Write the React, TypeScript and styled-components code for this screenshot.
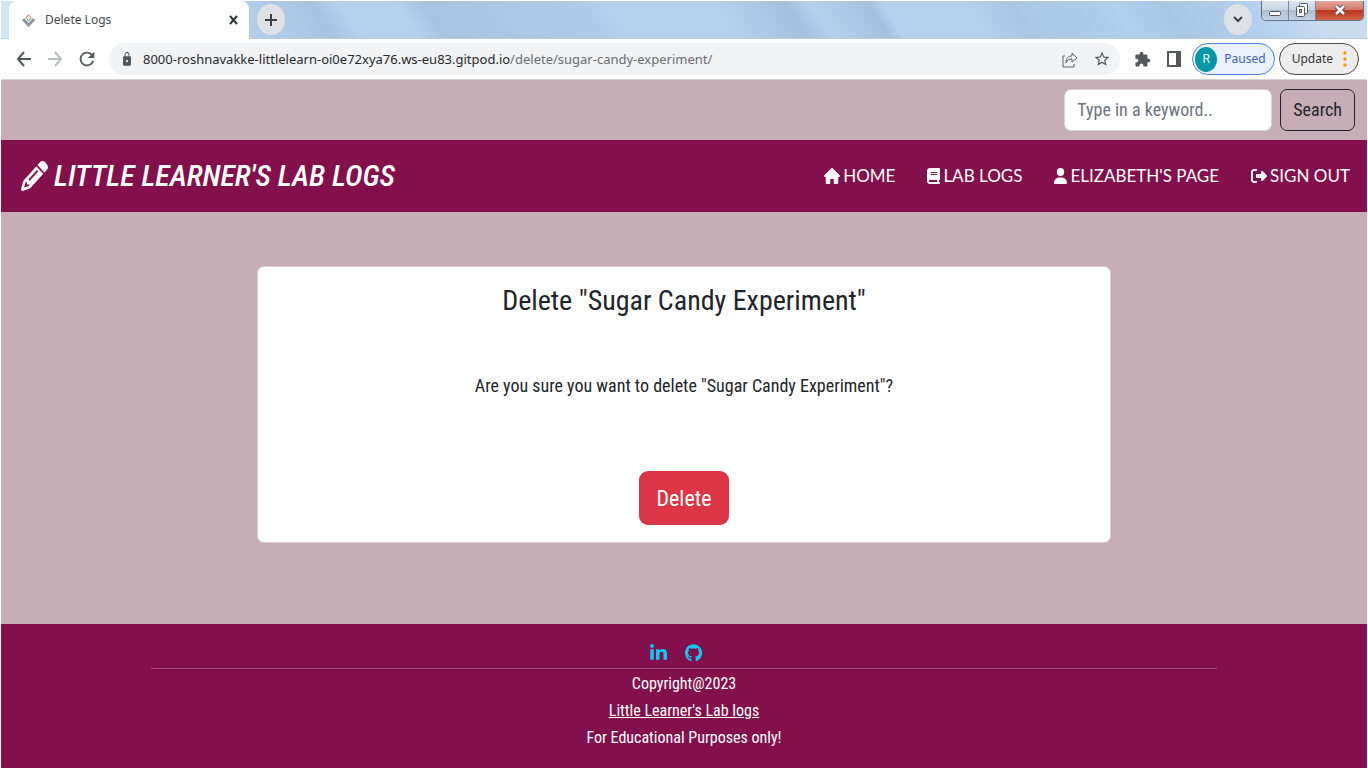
import React from "react";
import styled, { createGlobalStyle } from "styled-components";
import {
  FaBook,
  FaGithub,
  FaHouse,
  FaLinkedinIn,
  FaPencil,
  FaRightFromBracket,
  FaUser,
} from "react-icons/fa6";
import { MdExtension, MdLock, MdRefresh, MdStarBorder } from "react-icons/md";

const wine = "#830f4c";
const mauve = "#c9adb6";
const bodyFont = `"Roboto Condensed", Roboto, sans-serif`;
const chromeFont = `"Noto Sans", "Open Sans", sans-serif`;

const GlobalStyle = createGlobalStyle`
  * { box-sizing: border-box; }
  body { margin: 0; background: #fff; font-family: ${bodyFont}; color: #212529; }
  button, input { font: inherit; }
  button { cursor: pointer; }
  a { color: inherit; }
  h1, h2, p { margin: 0; font-weight: 400; }
  svg { flex: none; display: block; }
`;

const Frame = styled.div`
  min-height: 100vh;
  padding: 1px 1px 2px;
  display: flex;
  flex-direction: column;
`;

const TabStrip = styled.div`
  height: 38px;
  display: flex;
  align-items: flex-start;
  padding-left: 8px;
  border-bottom: 1px solid #b4cce8;
  background: linear-gradient(
    57deg,
    #d3e4f5 0%, #d3e4f5 3%, #afcce8 20%, #a8c3df 24%, #b5d1ec 26%, #b5d1ec 30%,
    #a8c3df 32%, #aecae6 43%, #b5d1ec 45%, #b5d1ec 53%, #a4c0dc 58%,
    #b5d1ec 60%, #a4c0dc 64%, #b5d1ec 65%, #b5d1ec 71%, #a9c5e1 74%,
    #b0d0ec 82%, #a8c6e3 85%, #b2cfec 91%, #c9ddf1 96%, #c9ddf1 100%
  );
`;

const Tab = styled.div`
  width: 240px;
  height: 38px;
  padding: 0 10px 0 13px;
  display: flex;
  align-items: center;
  gap: 10px;
  border-radius: 8px 8px 0 0;
  background: #fff;
  font: 12px/18px ${chromeFont};
  color: #45494d;
`;

const TabTitle = styled.span`
  flex: 1;
`;

const PlainButton = styled.button<{ $size?: number }>`
  width: ${(p) => p.$size ?? 20}px;
  height: 24px;
  padding: 0;
  border: 0;
  background: none;
  color: #54585c;
  display: flex;
  align-items: center;
  justify-content: center;
`;

const RoundButton = styled(PlainButton)`
  width: 28px;
  height: 31px;
  margin: 3px 9px 0 8px;
  border-radius: 50%;
  background: #dee1e6;
  color: #3c4043;
`;

const Spacer = styled.div`
  flex: 1;
`;

const WindowControls = styled.div`
  display: flex;
  height: 20px;
  margin-right: 3px;
  border: 1px solid #626f7c;
  border-top: 0;
  border-radius: 0 0 5px 5px;
  overflow: hidden;
`;

const WindowButton = styled.button<{ $close?: boolean }>`
  width: ${(p) => (p.$close ? 47 : 27)}px;
  padding: 0 0 2px;
  border: 0;
  border-right: ${(p) => (p.$close ? "0" : "1px solid #7b8997")};
  display: flex;
  align-items: center;
  justify-content: center;
  background: ${(p) =>
    p.$close
      ? "linear-gradient(#e2a99c, #d3796a 45%, #bf3520 50%, #cf6448)"
      : "linear-gradient(#dbe6f1, #c8d6e5 45%, #acbfd2 50%, #c0d2e4)"};
`;

const Toolbar = styled.div`
  height: 41px;
  padding: 0 8px 0 12px;
  display: flex;
  align-items: center;
  background: #fff;
  border-bottom: 1px solid #d4d2d4;
  color: #54585c;
  font: 12px/18px ${chromeFont};
`;

const NavButtons = styled.div`
  display: flex;
  gap: 12px;
  margin-right: 12px;
`;

const Omnibox = styled.div`
  flex: 1;
  height: 32px;
  padding: 0 8px 0 12px;
  display: flex;
  align-items: center;
  gap: 12px;
  border-radius: 16px;
  background: #f1f3f4;
`;

const LockIcon = styled(MdLock)`
  width: 12px;
  height: 16px;
  margin-right: -2px;
`;

const Address = styled.div`
  flex: 1;
  font-size: 13px;
  color: #6a6d71;
  white-space: nowrap;

  b {
    font-weight: 400;
    color: #26282b;
  }
`;

const ToolbarIcons = styled.div`
  display: flex;
  gap: 12px;
  margin: 0 8px 0 12px;
`;

const Pill = styled.button<{ $blue?: boolean }>`
  height: 32px;
  display: flex;
  align-items: center;
  gap: 7px;
  padding: ${(p) => (p.$blue ? "0 8px 0 2px" : "0 8px 0 12px")};
  margin-left: ${(p) => (p.$blue ? 0 : 4)}px;
  border: 1px solid ${(p) => (p.$blue ? "#4b84dc" : "#4a4a4a")};
  border-radius: 16px;
  background: ${(p) => (p.$blue ? "#eaf1fb" : "#ededed")};
  color: ${(p) => (p.$blue ? "#3f62cf" : "#333")};
`;

const Avatar = styled.span`
  width: 22px;
  height: 25px;
  border-radius: 50%;
  background: #0097a7;
  color: #fff;
  font: 12px/25px Roboto, sans-serif;
  text-align: center;
`;

const Page = styled.div`
  flex: 1;
  display: flex;
  flex-direction: column;
  background: ${mauve};
`;

const SearchForm = styled.form`
  display: flex;
  justify-content: flex-end;
  gap: 8px;
  padding: 9px 12px;
  font-size: 18px;
`;

const SearchInput = styled.input`
  width: 208px;
  height: 42px;
  padding: 0 12px 2px;
  border: 1px solid #ced4da;
  border-radius: 7px;
  background: #fff;

  &::placeholder {
    color: #6c757d;
    opacity: 1;
  }
`;

const SearchButton = styled.button`
  height: 42px;
  padding: 0 12px 2px;
  border: 1px solid #212529;
  border-radius: 7px;
  background: transparent;
  color: #212529;
`;

const Header = styled.header`
  height: 72px;
  padding: 0 17px 0 20px;
  display: flex;
  align-items: center;
  justify-content: space-between;
  border-top: 1px solid #780f45;
  border-bottom: 1px solid #780f45;
  background: ${wine};
  color: #fff;
`;

const Brand = styled.a`
  display: flex;
  align-items: center;
  gap: 6px;
  font-size: 30px;
  line-height: 36px;
  font-weight: 500;
  font-style: italic;
  text-decoration: none;

  svg {
    width: 27px;
    height: 30px;
  }
`;

const Nav = styled.nav`
  display: flex;
  gap: 32px;
`;

const NavLink = styled.a<{ $wide?: boolean }>`
  display: flex;
  align-items: center;
  gap: 3px;
  font: 17px/24px Lato, sans-serif;
  text-decoration: none;

  svg {
    width: ${(p) => (p.$wide ? 16 : 13)}px;
    height: 16px;
  }
`;

const Main = styled.main`
  flex: 1;
  padding: 54px 0 80px;
`;

const Card = styled.section`
  width: 62.5%;
  margin: 0 auto;
  padding: 17px 18px;
  display: flex;
  flex-direction: column;
  align-items: center;
  border: 1px solid #d8d0d3;
  border-radius: 7px;
  background: #fff;
`;

const CardTitle = styled.h1`
  font-size: 28px;
  line-height: 34px;
`;

const CardText = styled.p`
  margin: 54px 0 72px;
  font-size: 18px;
  line-height: 27px;
`;

const DeleteButton = styled.button`
  height: 54px;
  padding: 0 17px;
  border: 0;
  border-radius: 9px;
  background: #dc3545;
  color: #fff;
  font-size: 22px;
`;

const Footer = styled.footer`
  padding: 20px 0 17px;
  background: ${wine};
  color: #fff;
  text-align: center;
  font-size: 16px;
  line-height: 27px;
`;

const Social = styled.div`
  width: 78%;
  margin: 0 auto 1px;
  padding: 0 17px 6px 0;
  display: flex;
  justify-content: center;
  gap: 18px;
  border-bottom: 1px solid #a54f7e;
  color: #0dcaf0;

  svg {
    width: 17px;
    height: 18px;
  }
`;

const iconFit = { preserveAspectRatio: "none", "aria-hidden": true } as const;

export default function App() {
  return (
    <>
      <GlobalStyle />
      <Frame>
        <TabStrip>
          <Tab>
            <svg width="13" height="14" viewBox="0 0 13 14" fill="none" aria-hidden="true">
              <path d="M1 6 6.500 12 12 6" stroke="#94979b" strokeWidth="3" />
              <path d="M6.500 1.500 9 4.500 6.500 8 4 4.500Z" fill="#fff" stroke="#ee7b5e" />
              <path d="M4 4.500 6.500 8" stroke="#5fb4e6" />
              <path d="M6.500 8 9 4.500" stroke="#4bb592" />
            </svg>
            <TabTitle>Delete Logs</TabTitle>
            <PlainButton $size={12} aria-label="Close tab">
              <svg width="9" height="10" viewBox="0 0 9 10" stroke="#333639" strokeWidth="2">
                <path d="M1 1 8 9M8 1 1 9" />
              </svg>
            </PlainButton>
          </Tab>
          <RoundButton aria-label="New tab">
            <svg width="12" height="14" viewBox="0 0 12 14" stroke="currentColor" strokeWidth="2">
              <path d="M6 1v12M0 7h12" />
            </svg>
          </RoundButton>
          <Spacer />
          <RoundButton aria-label="Search tabs">
            <svg width="10" height="7" viewBox="0 0 10 7" fill="none" stroke="currentColor" strokeWidth="2">
              <path d="m1 1 4 4 4-4" />
            </svg>
          </RoundButton>
          <WindowControls>
            <WindowButton aria-label="Minimize">
              <svg width="12" height="14" viewBox="0 0 12 14">
                <rect x=".5" y="8.500" width="11" height="4" rx="1" fill="#fff" stroke="#4d5660" />
              </svg>
            </WindowButton>
            <WindowButton aria-label="Restore">
              <svg width="12" height="14" viewBox="0 0 12 14" fill="#fff" stroke="#4d5660">
                <rect x="3.500" y=".5" width="8" height="10" rx="1" />
                <rect x=".5" y="3.500" width="8" height="10" rx="1" />
                <rect x="3.500" y="6.500" width="2" height="3" fill="#b5c7d9" />
              </svg>
            </WindowButton>
            <WindowButton $close aria-label="Close">
              <svg width="12" height="12" viewBox="0 0 12 12" fill="none">
                <path d="m2 2 8 8M10 2l-8 8" stroke="#574044" strokeWidth="4.500" />
                <path d="m2 2 8 8M10 2l-8 8" stroke="#fff" strokeWidth="2.500" />
              </svg>
            </WindowButton>
          </WindowControls>
        </TabStrip>

        <Toolbar>
          <NavButtons>
            <PlainButton aria-label="Back">
              <svg width="15" height="16" viewBox="0 0 15 16" fill="none" stroke="#54585c" strokeWidth="2">
                <path d="M15 8H2M8 1 2 8l6 7" />
              </svg>
            </PlainButton>
            <PlainButton aria-label="Forward">
              <svg width="15" height="16" viewBox="0 0 15 16" fill="none" stroke="#b9bbbe" strokeWidth="2">
                <path d="M0 8h13M7 1l6 7-6 7" />
              </svg>
            </PlainButton>
            <PlainButton aria-label="Reload">
              <MdRefresh size={22} />
            </PlainButton>
          </NavButtons>
          <Omnibox>
            <LockIcon {...iconFit} />
            <Address>
              <b>8000-roshnavakke-littlelearn-oi0e72xya76.ws-eu83.gitpod.io</b>
              /delete/sugar-candy-experiment/
            </Address>
            <PlainButton aria-label="Share">
              <svg width="16" height="17" viewBox="0 0 16 17" fill="none" stroke="#5f6368">
                <path d="M3 5H1v11h11v-3" />
                <path d="M4 12c0-5 2-7 6-7V2l5 5-5 4V8c-3 0-5 1-6 4Z" strokeLinejoin="round" />
              </svg>
            </PlainButton>
            <PlainButton aria-label="Bookmark">
              <MdStarBorder size={18} />
            </PlainButton>
          </Omnibox>
          <ToolbarIcons>
            <PlainButton aria-label="Extensions">
              <MdExtension size={17} />
            </PlainButton>
            <PlainButton aria-label="Side panel">
              <svg width="14" height="16" viewBox="0 0 14 16">
                <path d="M0 0h14v16H0Zm2 2v12h7V2Z" fill="#54585c" fillRule="evenodd" />
              </svg>
            </PlainButton>
          </ToolbarIcons>
          <Pill $blue>
            <Avatar>R</Avatar>
            Paused
          </Pill>
          <Pill>
            Update
            <svg width="10" height="16" viewBox="0 0 10 16" fill="#f29900" aria-hidden="true">
              <circle cx="5" cy="2" r="1.700" />
              <circle cx="5" cy="8" r="1.700" />
              <circle cx="5" cy="14" r="1.700" />
            </svg>
          </Pill>
        </Toolbar>

        <Page>
          <SearchForm onSubmit={(e) => e.preventDefault()}>
            <SearchInput type="search" aria-label="Search" placeholder="Type in a keyword.." />
            <SearchButton>Search</SearchButton>
          </SearchForm>
          <Header>
            <Brand href="#">
              <FaPencil {...iconFit} />
              LITTLE LEARNER'S LAB LOGS
            </Brand>
            <Nav>
              <NavLink href="#" $wide>
                <FaHouse {...iconFit} />
                HOME
              </NavLink>
              <NavLink href="#">
                <FaBook {...iconFit} />
                LAB LOGS
              </NavLink>
              <NavLink href="#">
                <FaUser {...iconFit} />
                ELIZABETH'S PAGE
              </NavLink>
              <NavLink href="#" $wide>
                <FaRightFromBracket {...iconFit} />
                SIGN OUT
              </NavLink>
            </Nav>
          </Header>
          <Main>
            <Card>
              <CardTitle>Delete "Sugar Candy Experiment"</CardTitle>
              <CardText>Are you sure you want to delete "Sugar Candy Experiment"?</CardText>
              <DeleteButton>Delete</DeleteButton>
            </Card>
          </Main>
          <Footer>
            <Social>
              <a href="#" aria-label="LinkedIn">
                <FaLinkedinIn {...iconFit} />
              </a>
              <a href="#" aria-label="GitHub">
                <FaGithub {...iconFit} />
              </a>
            </Social>
            <p>Copyright@2023</p>
            <p>
              <a href="#">Little Learner's Lab logs</a>
            </p>
            <p>For Educational Purposes only!</p>
          </Footer>
        </Page>
      </Frame>
    </>
  );
}
